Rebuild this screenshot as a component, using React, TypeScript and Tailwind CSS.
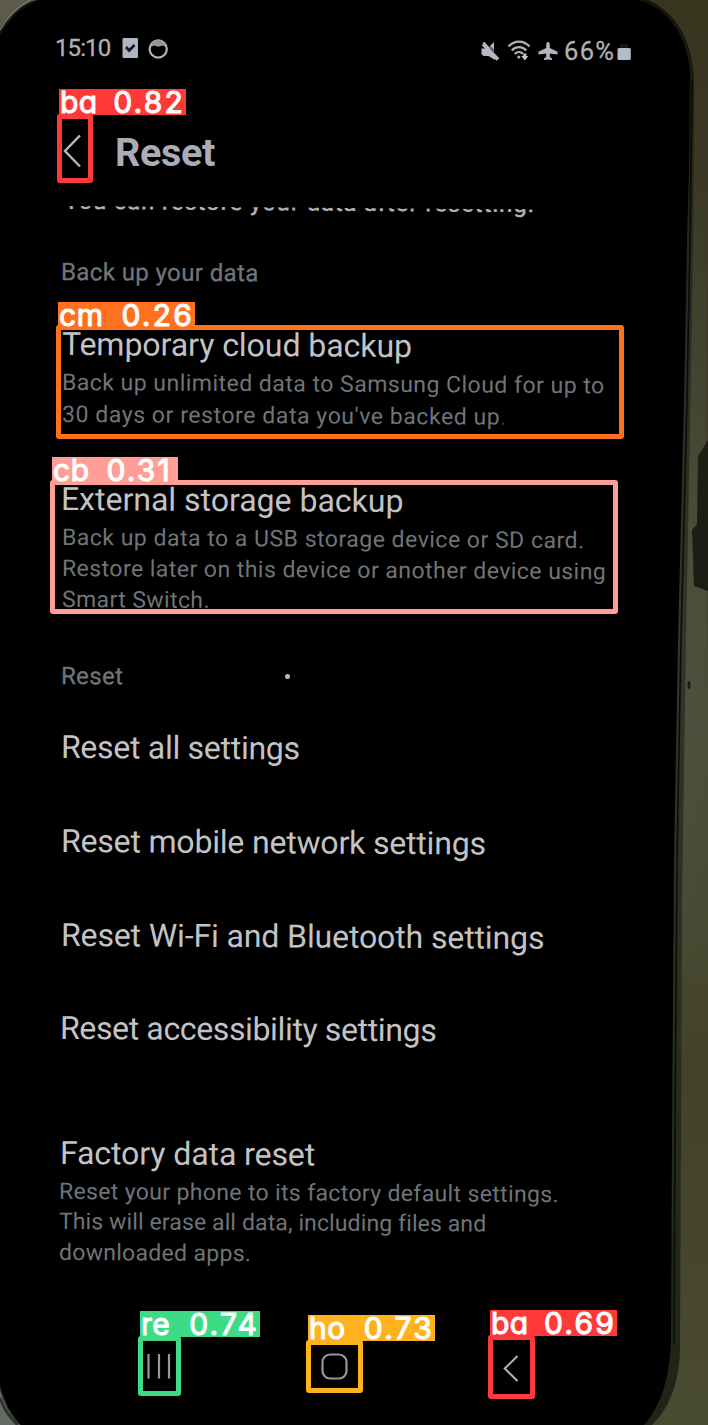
import type { ReactNode } from "react";

type LineProps = { className: string; children: ReactNode };

function Tilted({ className, children }: LineProps) {
  return (
    <p className={`origin-left rotate-[0.35deg] whitespace-nowrap ${className}`}>{children}</p>
  );
}

function ItemTitle({ className, children }: LineProps) {
  return (
    <Tilted className={`h-9 text-[32px] leading-9 text-[#c3c3c6] ${className}`}>{children}</Tilted>
  );
}

function Detail({ className, children }: LineProps) {
  return <Tilted className={`text-[23px] text-[#6f7479] ${className}`}>{children}</Tilted>;
}

function SectionHeading({ className, children }: LineProps) {
  return (
    <Tilted
      className={`h-6 text-[24px] leading-6 text-[#70757a] [-webkit-text-stroke:0.3px_#70757a] ${className}`}
    >
      {children}
    </Tilted>
  );
}

type DetectionProps = {
  code: string;
  score: string;
  box: string;
  label: string;
};

function Detection({ code, score, box, label }: DetectionProps) {
  return (
    <>
      <div className={`absolute rounded-[3px] border-[5px] ${box}`} />
      <div
        className={`absolute flex h-[26px] items-center justify-between pl-px font-[Inter,sans-serif] text-[30px] leading-[26px] text-white [-webkit-text-stroke:1.1px_white] [font-feature-settings:'cv11'] ${label}`}
      >
        <span className="tracking-[0.5px]">{code}</span>
        <span className="tracking-[2.2px]">{score}</span>
      </div>
    </>
  );
}

function Backdrop() {
  return (
    <svg className="absolute inset-0" width="708" height="1425" viewBox="0 0 708 1425">
      <defs>
        <linearGradient id="wall" x1="0" y1="0" x2="0" y2="1">
          <stop offset="0" stopColor="#38351f" />
          <stop offset="0.3" stopColor="#3f3f2a" />
          <stop offset="0.5" stopColor="#4c4f3a" />
          <stop offset="0.65" stopColor="#484a32" />
          <stop offset="0.75" stopColor="#43412a" />
          <stop offset="1" stopColor="#494b30" />
        </linearGradient>
        <linearGradient id="frame" x1="0" y1="0" x2="0" y2="1">
          <stop offset="0" stopColor="#12160d" />
          <stop offset="0.15" stopColor="#23271d" />
          <stop offset="0.45" stopColor="#30362a" />
          <stop offset="1" stopColor="#1f2417" />
        </linearGradient>
        <linearGradient id="sheen" x1="0" y1="0" x2="0" y2="1">
          <stop offset="0" stopColor="#4d523e" stopOpacity="0" />
          <stop offset="0.5" stopColor="#4d523e" stopOpacity="0.7" />
          <stop offset="1" stopColor="#4d523e" stopOpacity="0" />
        </linearGradient>
      </defs>
      <rect width="708" height="1425" fill="url(#wall)" />
      <path d="M0 0H60V40H0Z" fill="#5d5a4e" />
      <path d="M0 1380H40V1425H0Z" fill="#646b66" />
      <path d="M694 190L686 640L682 980L696 980L706 640V190Z" fill="url(#sheen)" />
      <path d="M708 440L698 456L697 524L692 530L694 586L708 591Z" fill="#1d1d15" />
      <path
        d="M0 28C8 14 22 4 36 0H648C676 12 692 40 694 78L693 240L690 420L686 640L682 900L681 1130L680 1350C679 1385 668 1410 652 1425H20C10 1415 4 1403 0 1390Z"
        fill="url(#frame)"
      />
      <path d="M0 30C7 17 18 7 30 0" fill="none" stroke="#6e7a70" strokeWidth="1.5" />
      <path d="M0 1398C4 1409 10 1418 18 1425" fill="none" stroke="#2d332c" strokeWidth="3" />
      <path
        d="M0 36C8 20 22 6 40 0H638C668 8 688 36 690 74L689 170L687 240L684 400L678 640L674 860L672 1130L671 1340C670 1375 662 1405 644 1425H21C10 1413 4 1400 0 1384Z"
        fill="#000"
      />
      <path
        d="M692 80L690 240L687 400L681 640L677 860L675 1130L674 1345"
        fill="none"
        stroke="#090b06"
        strokeWidth="1.5"
      />
      <ellipse cx="689" cy="685" rx="1.5" ry="4" fill="#191c10" />
    </svg>
  );
}

function StatusBar() {
  return (
    <header className="flex h-[132px] items-start pt-9 pl-[55px] text-[#aeb1b8]">
      <span className="h-6 w-[57px] text-[24px] leading-6 tracking-[-0.9px] whitespace-nowrap [-webkit-text-stroke:0.3px_#aeb1b8]">
        15:10
      </span>
      <svg className="mt-px ml-[9px]" width="50" height="24" viewBox="0 0 50 24">
        <rect x="1.5" y="1" width="15.5" height="20" rx="1" fill="#acb5c0" />
        <path d="M5 10L8.2 13.5L13.5 8" fill="none" stroke="#15181f" strokeWidth="2.6" />
        <circle cx="37.2" cy="12" r="8.6" fill="none" stroke="#b2b6ba" strokeWidth="2.2" />
        <path d="M29.5 10C30.5 5 34 3 37.2 3S44 5 45 10L41.5 8.5L37.5 9.8L33 8.5Z" fill="#8f989f" />
      </svg>
      <svg className="mt-[3px] ml-[309px]" width="80" height="24" viewBox="0 0 80 24">
        <g fill="#b3b8c4">
          <path d="M1.5 9.5H6L15 18V21L8.5 17H3.5L1.5 15Z" />
          <path d="M9 8L14 3V13Z" />
          <path d="M2.5 3.5L4.5 3L10 9L7 10Z" />
        </g>
        <path d="M3 5L18 20.500" stroke="#b3b8c4" strokeWidth="3.600" />
        <path d="M5 2.500L17.500 15" stroke="#050507" strokeWidth="1" />
        <g fill="none" stroke="#aeb1b5" strokeWidth="2.2">
          <path d="M28.500 7.500C34.500 1 43.500 1 49.500 7.500" />
          <path d="M31.800 11.500C35.500 7 42.500 7 46.200 11.500" />
          <path d="M34.800 15C37 12.300 41 12.300 43 15" />
        </g>
        <circle cx="38.8" cy="18" r="1.6" fill="#aeb1b5" />
        <path d="M43.300 14.500H46.300V17H48.300L44.800 21.500L41.300 17H43.300Z" fill="#c3c6ce" />
        <path
          d="M68 3C69.300 3 69.800 4.500 69.800 6V9L77.500 12.800V15.600L69.800 14.500V18L72 19.500V21L68 20.600L64 21V19.500L66.200 18V14.500L58.500 15.600V12.800L66.200 9V6C66.200 4.500 66.700 3 68 3Z"
          fill="#b4b7be"
        />
      </svg>
      <span className="mt-[3px] ml-[4px] h-6 w-[52px] text-[25.5px] leading-6 tracking-[1.3px] whitespace-nowrap [-webkit-text-stroke:0.3px_#aeb1b8]">
        66%
      </span>
      <svg className="mt-[5px] ml-px" width="15" height="22" viewBox="0 0 15 22">
        <path d="M3 7V4.500C3 2 11 2 11 4.500V7Z" fill="#15161a" />
        <rect x="0.5" y="7" width="13.3" height="12" rx="1.5" fill="#b4bbcb" />
      </svg>
    </header>
  );
}

function NavigationBar() {
  return (
    <nav className="mt-[71px] flex h-[54px] items-center text-[#97979b]">
      <svg className="ml-[146px]" width="28" height="30" viewBox="0 0 28 30">
        <path d="M2.5 2V26.5M13 2V26.5M23 2V26.5" stroke="currentColor" strokeWidth="2.2" fill="none" />
      </svg>
      <svg className="ml-[146px]" width="30" height="30" viewBox="0 0 30 30">
        <rect x="2.5" y="2.5" width="24" height="24" rx="7.5" stroke="currentColor" strokeWidth="2.2" fill="none" />
      </svg>
      <svg className="ml-[151px]" width="22" height="30" viewBox="0 0 22 30">
        <path d="M16.5 4L3.8 16.5L16.5 29" stroke="#b2b2b4" strokeWidth="2.1" fill="none" />
      </svg>
    </nav>
  );
}

export default function App() {
  return (
    <div className="relative h-[1425px] w-[708px] overflow-hidden bg-black font-[Roboto,sans-serif]">
      <Backdrop />

      <div className="relative flex flex-col">
        <StatusBar />

        <div className="flex h-10 items-center">
          <svg className="ml-[62px]" width="22" height="34" viewBox="0 0 22 34">
            <path d="M18 0.5L3 16L18 31.5" fill="none" stroke="#b4b4b8" strokeWidth="2.5" />
          </svg>
          <h1 className="mt-[2px] ml-[31px] text-[39.5px] leading-10 font-bold tracking-[-0.3px] text-[#acacb6]">
            Reset
          </h1>
        </div>

        <main className="flex flex-col pl-[61px]">
          <div className="mt-[34px] h-[14px] w-[500px] origin-left rotate-[0.4deg] overflow-hidden">
            <p className="-mt-[17px] ml-[3px] text-[24px] leading-6 font-medium tracking-[0.77px] whitespace-nowrap text-[#b0b0b4]">
              You can restore your data after resetting.
            </p>
          </div>

          <SectionHeading className="mt-[40px] tracking-[0.4px]">Back up your data</SectionHeading>

          <ItemTitle className="mt-[42px] ml-px tracking-[-0.04px]">Temporary cloud backup</ItemTitle>
          <div className="mt-[5px] ml-px flex flex-col">
            <Detail className="leading-8 tracking-[0.48px]">
              Back up unlimited data to Samsung Cloud for up to
            </Detail>
            <Detail className="leading-8 tracking-[0.57px]">
              30 days or restore data you've backed up<span className="text-[#3a3b3e]">.</span>
            </Detail>
          </div>

          <ItemTitle className="mt-[50px]">External storage backup</ItemTitle>
          <div className="mt-[5px] ml-px flex flex-col">
            <Detail className="leading-[31px] tracking-[0.5px]">
              Back up data to a USB storage device or SD card.
            </Detail>
            <Detail className="leading-[31px] tracking-[0.46px]">
              Restore later on this device or another device using
            </Detail>
            <Detail className="leading-[31px] tracking-[0.4px]">Smart Switch.</Detail>
          </div>

          <div className="mt-[49px] flex items-center">
            <SectionHeading className="w-[64px] tracking-[0.35px]">Reset</SectionHeading>
            <span className="ml-[160px] size-[5px] rounded-full bg-[#b8bec4]" />
          </div>

          <ItemTitle className="mt-[41px] tracking-[-0.28px]">Reset all settings</ItemTitle>
          <ItemTitle className="mt-[58px] tracking-[-0.18px]">Reset mobile network settings</ItemTitle>
          <ItemTitle className="mt-[58px] tracking-[-0.12px]">Reset Wi-Fi and Bluetooth settings</ItemTitle>
          <ItemTitle className="mt-[57px] -ml-px tracking-[-0.36px]">Reset accessibility settings</ItemTitle>

          <ItemTitle className="mt-[89px] -ml-px tracking-[-0.08px]">Factory data reset</ItemTitle>
          <div className="mt-[5.5px] -ml-[2px] flex flex-col">
            <Detail className="leading-[30.7px] tracking-[0.35px]">
              Reset your phone to its factory default settings.
            </Detail>
            <Detail className="leading-[30.7px] tracking-[0.12px]">
              This will erase all data, including files and
            </Detail>
            <Detail className="leading-[30.7px] tracking-[0.3px]">downloaded apps.</Detail>
          </div>
        </main>

        <NavigationBar />
      </div>

      <Detection
        code="ba"
        score="0.82"
        box="top-[114px] left-[57px] h-[69px] w-[36px] border-[#ff3838]"
        label="top-[89px] left-[59px] w-[127px] bg-[#ff3838] pr-px"
      />
      <Detection
        code="cm"
        score="0.26"
        box="top-[325px] left-[56px] h-[114px] w-[568px] border-[#ff701f]"
        label="top-[302px] left-[58px] w-[137px] bg-[#ff701f] pr-px"
      />
      <Detection
        code="cb"
        score="0.31"
        box="top-[480px] left-[50px] h-[134px] w-[568px] border-[#ff9d97]"
        label="top-[457px] left-[52px] w-[126px] bg-[#ff9d97] pr-[6px]"
      />
      <Detection
        code="re"
        score="0.74"
        box="top-[1336px] left-[138px] h-[60px] w-[43px] border-[#3ddb86]"
        label="top-[1311px] left-[140px] w-[120px] bg-[#3ddb86] pr-px"
      />
      <Detection
        code="ho"
        score="0.73"
        box="top-[1340px] left-[306px] h-[53px] w-[57px] border-[#ffb21d]"
        label="top-[1315px] left-[308px] w-[127px] bg-[#ffb21d] pr-px"
      />
      <Detection
        code="ba"
        score="0.69"
        box="top-[1335px] left-[488px] h-[64px] w-[47px] border-[#ff3838]"
        label="top-[1310px] left-[490px] w-[127px] bg-[#ff3838] pr-px"
      />
    </div>
  );
}
